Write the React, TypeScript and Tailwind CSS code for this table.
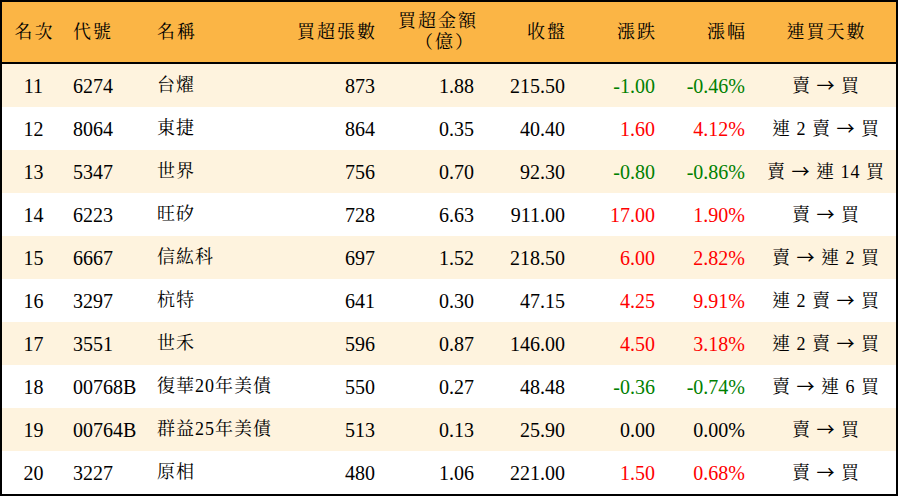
const rows = [
  { rank: "11", code: "6274", name: "台燿", vol: "873", amt: "1.88", close: "215.50", chg: "-1.00", pct: "-0.46%", days: "賣 → 買" },
  { rank: "12", code: "8064", name: "東捷", vol: "864", amt: "0.35", close: "40.40", chg: "1.60", pct: "4.12%", days: "連 2 賣 → 買" },
  { rank: "13", code: "5347", name: "世界", vol: "756", amt: "0.70", close: "92.30", chg: "-0.80", pct: "-0.86%", days: "賣 → 連 14 買" },
  { rank: "14", code: "6223", name: "旺矽", vol: "728", amt: "6.63", close: "911.00", chg: "17.00", pct: "1.90%", days: "賣 → 買" },
  { rank: "15", code: "6667", name: "信紘科", vol: "697", amt: "1.52", close: "218.50", chg: "6.00", pct: "2.82%", days: "賣 → 連 2 買" },
  { rank: "16", code: "3297", name: "杭特", vol: "641", amt: "0.30", close: "47.15", chg: "4.25", pct: "9.91%", days: "連 2 賣 → 買" },
  { rank: "17", code: "3551", name: "世禾", vol: "596", amt: "0.87", close: "146.00", chg: "4.50", pct: "3.18%", days: "連 2 賣 → 買" },
  { rank: "18", code: "00768B", name: "復華20年美債", vol: "550", amt: "0.27", close: "48.48", chg: "-0.36", pct: "-0.74%", days: "賣 → 連 6 買" },
  { rank: "19", code: "00764B", name: "群益25年美債", vol: "513", amt: "0.13", close: "25.90", chg: "0.00", pct: "0.00%", days: "賣 → 買" },
  { rank: "20", code: "3227", name: "原相", vol: "480", amt: "1.06", close: "221.00", chg: "1.50", pct: "0.68%", days: "賣 → 買" },
];

const cols = "grid grid-cols-[63px_84px_141px_95px_99px_91px_90px_90px_141px]";

function changeColor(v: string) {
  if (v.startsWith("-")) return "text-[#008000]";
  if (parseFloat(v) === 0) return "text-black";
  return "text-[#ff0000]";
}

// the arrow is drawn with the CJK font so it gets the long full-width shape
function Days({ text }: { text: string }) {
  const [left, right] = text.split("→");
  return (
    <>
      {left}
      <span style={{ fontFamily: '"Noto Sans CJK TC", sans-serif' }}>→</span>
      {right}
    </>
  );
}

export default function App() {
  return (
    <div
      className="w-[898px] h-[496px] border-2 border-black bg-white text-black overflow-hidden"
      style={{ fontFamily: '"Liberation Serif", "Noto Serif CJK TC", "Noto Sans CJK TC", serif' }}
    >
      {/* header */}
      <div className={`${cols} h-[62px] bg-[#fbb545] border-b-2 border-black items-center text-[18px] tracking-[2px]`}>
        <div className="text-center pl-[2px]">名次</div>
        <div className="pl-[8px]">代號</div>
        <div className="pl-[8px]">名稱</div>
        <div className="text-right pr-[8px]">買超張數</div>
        <div className="text-right pr-[6px] leading-[21px] flex flex-col items-end">
          <span>買超金額</span>
          <span className="pr-[3px]">（億）</span>
        </div>
        <div className="text-right pr-[8px]">收盤</div>
        <div className="text-right pr-[8px]">漲跌</div>
        <div className="text-right pr-[8px]">漲幅</div>
        <div className="text-center pl-[2px]">連買天數</div>
      </div>

      {/* rows */}
      {rows.map((r, i) => (
        <div
          key={r.rank}
          className={`${cols} h-[43px] items-center text-[20px] ${i % 2 === 0 ? "bg-[#fef3de]" : "bg-white"}`}
        >
          <div className="text-center">{r.rank}</div>
          <div className="pl-[8px]">{r.code}</div>
          <div className="pl-[8px] text-[18px] tracking-[1px]">{r.name}</div>
          <div className="text-right pr-[10px]">{r.vol}</div>
          <div className="text-right pr-[10px]">{r.amt}</div>
          <div className="text-right pr-[10px]">{r.close}</div>
          <div className={`text-right pr-[10px] ${changeColor(r.chg)}`}>{r.chg}</div>
          <div className={`text-right pr-[10px] ${changeColor(r.pct)}`}>{r.pct}</div>
          <div className="text-center text-[18px] tracking-[1px] whitespace-pre pl-[1px]">
            <Days text={r.days} />
          </div>
        </div>
      ))}
    </div>
  );
}
